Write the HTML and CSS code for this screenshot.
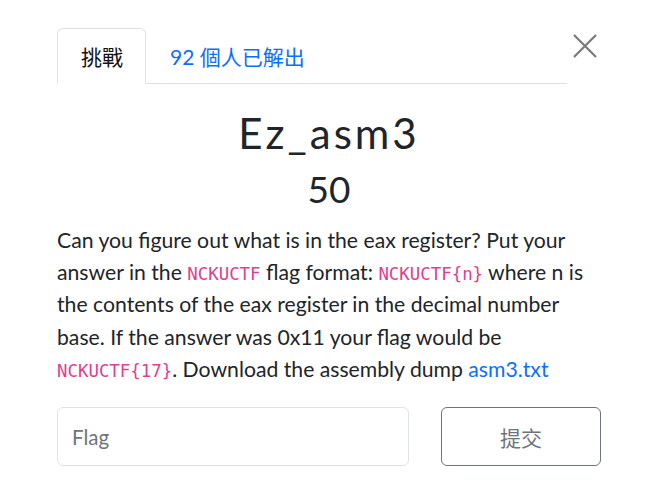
FILE: index.html
```html
<!DOCTYPE html>
<html>
<head>
<meta charset="utf-8">
<link rel="stylesheet" href="styles.css">
</head>
<body>
<div class="modal">
  <div class="header">
    <ul class="tabs">
      <li class="tab active">挑戰</li>
      <li class="tab link">92 個人已解出</li>
    </ul>
    <button class="close" aria-label="Close">
      <svg width="26" height="26" viewBox="0 0 26 26"><path d="M2 2 L24 24 M24 2 L2 24" stroke="#7a7a7a" stroke-width="2.2" fill="none"/></svg>
    </button>
  </div>
  <h2 class="name">Ez_asm3</h2>
  <h3 class="value">50</h3>
  <p class="desc">Can you figure out what is in the eax register? Put your answer in the <code>NCKUCTF</code> flag format: <code>NCKUCTF{n}</code> where n is the contents of the eax register in the decimal number base. If the answer was 0x11 your flag would be <code>NCKUCTF{17}</code>. Download the assembly dump <a href="#">asm3.txt</a></p>
  <div class="submit-row">
    <input class="flag" type="text" placeholder="Flag">
    <button class="submit">提交</button>
  </div>
</div>
</body>
</html>
```
FILE: styles.css
```css
html, body {
  margin: 0;
  padding: 0;
  background: #fff;
}
body {
  font-family: Lato, "Noto Sans CJK TC", sans-serif;
  color: #212529;
}
.modal {
  width: 544px;
  padding: 28px 0 0 57px;
}
.header {
  display: flex;
  align-items: flex-start;
}
.tabs {
  list-style: none;
  margin: 0;
  padding: 0;
  display: flex;
  width: 510px;
  border-bottom: 1px solid #dee2e6;
}
.tab {
  height: 54px;
  display: flex;
  align-items: center;
  font-size: 21px;
  padding: 0 22px 0 23px;
  border: 1px solid transparent;
  border-top-left-radius: 6px;
  border-top-right-radius: 6px;
  margin-bottom: -1px;
}
.tab.active {
  border-color: #dee2e6 #dee2e6 #fff;
  color: #111;
}
.tab.link {
  color: #0d6efd;
}
.close {
  border: 0;
  background: none;
  padding: 0;
  margin: 5px 0 0 5px;
  width: 26px;
  height: 26px;
  display: block;
}
.close svg { display: block; }
.name {
  margin: 24px 0 0;
  text-align: center;
  font-size: 42px;
  font-weight: 400;
  letter-spacing: 3px;
  line-height: 50px;
}
.value {
  margin: 9px 0 0;
  text-align: center;
  font-size: 37px;
  font-weight: 400;
  line-height: 44px;
}
.desc {
  margin: 13px 0 0;
  font-size: 21.2px;
  line-height: 32.2px;
}
code {
  font-family: "DejaVu Sans Mono", monospace;
  font-size: 17.4px;
  line-height: 1;
  color: #e0408c;
}
a {
  color: #0d6efd;
  text-decoration: none;
}
.submit-row {
  display: flex;
  margin-top: 22px;
}
.flag {
  width: 352px;
  height: 59px;
  box-sizing: border-box;
  border: 1px solid #dee2e6;
  border-radius: 6px;
  padding: 0 14px;
  font-family: Lato, sans-serif;
  font-size: 20.5px;
  outline: none;
}
.flag::placeholder { color: #6c757d; }
.submit {
  margin-left: 32px;
  width: 160px;
  height: 59px;
  box-sizing: border-box;
  border: 1px solid #6c757d;
  border-radius: 6px;
  background: #fff;
  color: #6c757d;
  font-family: Lato, "Noto Sans CJK TC", sans-serif;
  font-size: 21px;
}
```
